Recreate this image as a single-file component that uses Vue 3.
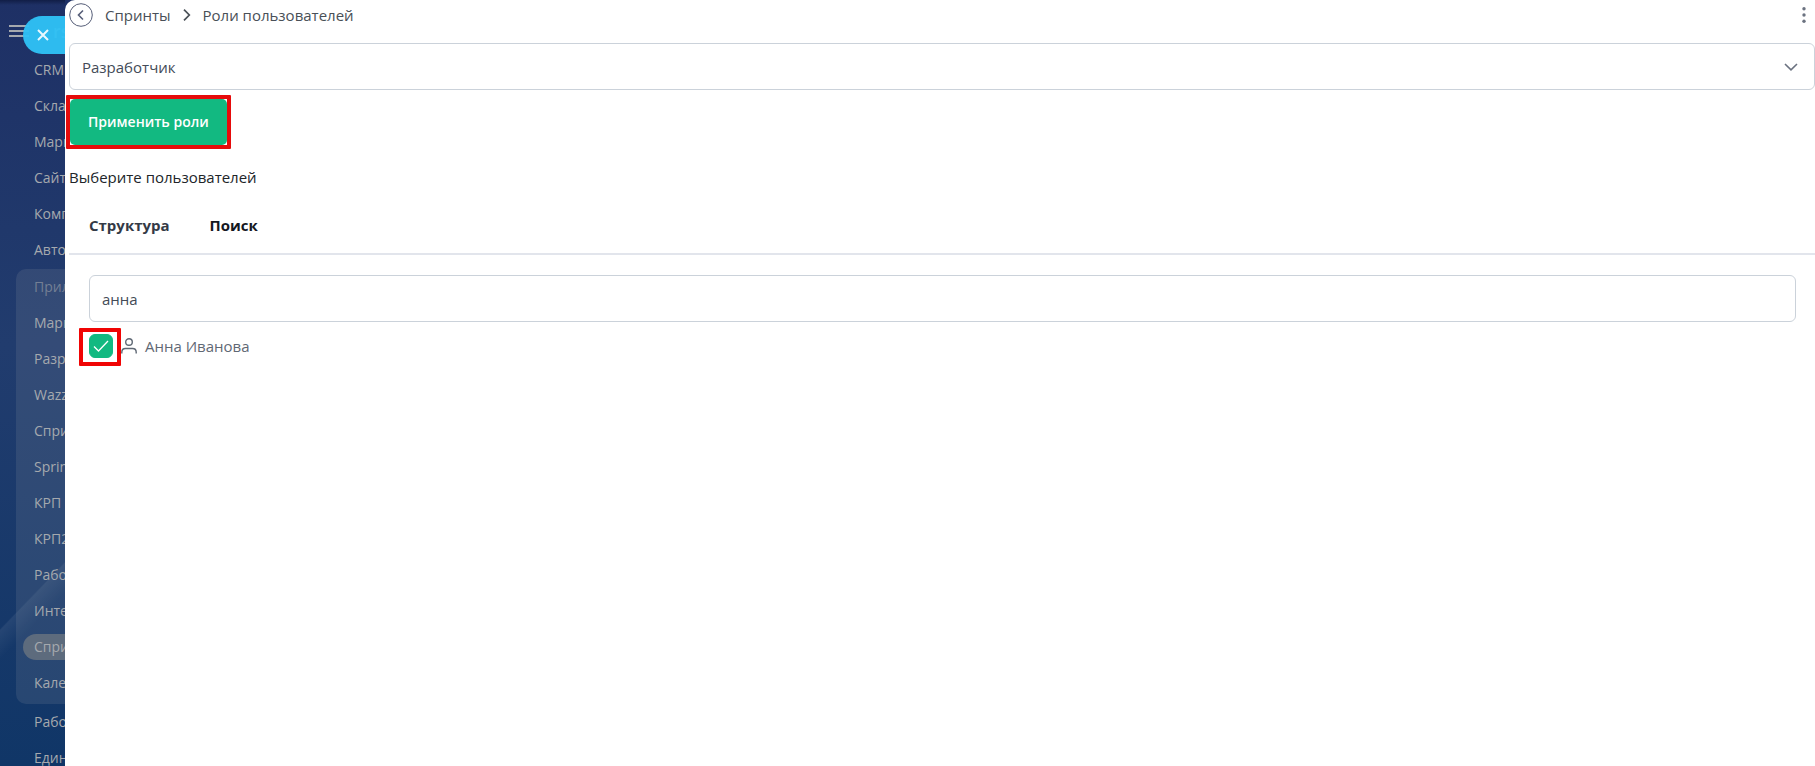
<script setup>
import { ref } from 'vue'

const role = ref('Разработчик')
const query = ref('анна')
const activeTab = ref('search')
const checked = ref(true)

const topMenu = ['CRM', 'Склад', 'Маркетинг', 'Сайты', 'Компания', 'Автоматизация']
const appMenu = [
  { title: 'Приложения', muted: true },
  { title: 'Маркет' },
  { title: 'Разработчикам' },
  { title: 'Wazzup' },
  { title: 'Спринты' },
  { title: 'Sprint' },
  { title: 'КРП' },
  { title: 'КРП2' },
  { title: 'Работа' },
  { title: 'Интеграции' },
  { title: 'Спринты', active: true },
  { title: 'Календарь' },
]
const bottomMenu = ['Работа', 'Единый']
const tabs = [
  { id: 'structure', title: 'Структура' },
  { id: 'search', title: 'Поиск' },
]
</script>

<template>
  <div class="page">
    <aside class="sidebar">
      <div class="sidebar-head">
        <svg class="burger" width="20" height="12" viewBox="0 0 20 12">
          <path d="M0 1h20M0 6h20M0 11h20" stroke="currentColor" stroke-width="2" />
        </svg>
        <span class="logo">rs</span>
      </div>
      <button class="close-btn" type="button" aria-label="Закрыть">
        <svg width="12" height="12" viewBox="0 0 12 12">
          <path d="M1 1l10 10M11 1L1 11" stroke="currentColor" stroke-width="2" />
        </svg>
      </button>
      <nav class="menu">
        <a v-for="item in topMenu" :key="item" class="menu-item" href="#"><span>{{ item }}</span></a>
        <div class="menu-group">
          <a
            v-for="(item, i) in appMenu"
            :key="i"
            class="menu-item"
            :class="{ muted: item.muted, active: item.active }"
            href="#"
          ><span>{{ item.title }}</span></a>
        </div>
        <a v-for="item in bottomMenu" :key="item" class="menu-item" href="#"><span>{{ item }}</span></a>
      </nav>
    </aside>

    <main class="panel">
      <header class="header">
        <button class="back-btn" type="button" aria-label="Назад">
          <svg width="24" height="24" viewBox="0 0 24 24" fill="none" stroke="currentColor">
            <circle cx="12" cy="12" r="11.3" stroke-width="1" />
            <path d="M14 7.5L9.5 12l4.500 4.500" stroke-width="1.600" />
          </svg>
        </button>
        <nav class="crumbs">
          <a href="#">Спринты</a>
          <svg width="8" height="12" viewBox="0 0 8 12" fill="none" stroke="currentColor">
            <path d="M1 0.700L6.300 6L1 11.300" stroke-width="1.700" />
          </svg>
          <span>Роли пользователей</span>
        </nav>
        <button class="more-btn" type="button" aria-label="Ещё">
          <svg width="4" height="16" viewBox="0 0 4 16" fill="currentColor">
            <circle cx="2" cy="1.800" r="1.700" />
            <circle cx="2" cy="8" r="1.700" />
            <circle cx="2" cy="14.200" r="1.700" />
          </svg>
        </button>
      </header>

      <div class="select-wrap">
        <select v-model="role" class="field" aria-label="Роль">
          <option>Разработчик</option>
        </select>
        <svg class="select-arrow" width="14" height="8" viewBox="0 0 14 8" fill="none" stroke="currentColor">
          <path d="M1 1l6 5.800L13 1" stroke-width="1.600" />
        </svg>
      </div>

      <div class="apply-frame">
        <button class="apply-btn" type="button">Применить роли</button>
      </div>

      <p class="caption">Выберите пользователей</p>

      <div class="tabs" role="tablist">
        <button
          v-for="tab in tabs"
          :key="tab.id"
          class="tab"
          :class="{ current: activeTab === tab.id }"
          type="button"
          role="tab"
          :aria-selected="activeTab === tab.id"
          @click="activeTab = tab.id"
        >{{ tab.title }}</button>
      </div>

      <section class="tab-body">
        <input v-model="query" class="field" type="text" aria-label="Поиск пользователей">
        <div class="user">
          <span class="check-frame">
            <span class="check">
              <input id="user-anna" v-model="checked" type="checkbox">
              <svg v-if="checked" width="16" height="12" viewBox="0 0 16 12" fill="none">
                <path d="M1 6.500L5.500 11L15 1" stroke="#fff" stroke-width="1.300" />
              </svg>
            </span>
          </span>
          <label class="user-label" for="user-anna">
            <svg width="16" height="16" viewBox="0 0 16 16" fill="none" stroke="currentColor" stroke-width="1.400">
              <circle cx="8" cy="4" r="3.300" />
              <path d="M0.800 15.500v-1.300C0.800 11.800 2.400 10.500 4.500 10.500h7c2.100 0 3.700 1.300 3.700 3.700v1.300" />
            </svg>
            <span>Анна Иванова</span>
          </label>
        </div>
      </section>
    </main>
  </div>
</template>

<style>
body {
  margin: 0;
}
</style>

<style scoped>
.page {
  display: grid;
  grid-template-columns: 65px minmax(0, 1fr);
  height: 100vh;
  overflow: hidden;
  background: linear-gradient(180deg, #1e3065 0, #213c6e 45%, #103667 100%);
  font-family: "Segoe UI", "Open Sans", "Noto Sans", sans-serif;
  font-size: 15px;
  line-height: 24px;
  color: #495057;
}

button {
  margin: 0;
  padding: 0;
  border: 0;
  background: none;
  font: inherit;
  color: inherit;
  cursor: pointer;
}

a {
  color: inherit;
  text-decoration: none;
}

svg {
  display: block;
  flex-shrink: 0;
}

.sidebar {
  position: relative;
  overflow: hidden;
  color: #a5a9ae;
  font-size: 14px;
  background:
    linear-gradient(180deg, rgba(8, 18, 50, 0.6), transparent 5px),
    linear-gradient(134deg, transparent 0 50%, rgba(255, 255, 255, 0.07) 51%, transparent 66%) 0 530px / 65px 130px no-repeat;
}

.sidebar-head {
  box-sizing: border-box;
  display: flex;
  align-items: center;
  gap: 24px;
  height: 52px;
  padding: 10px 0 0 9px;
}

.logo {
  font-size: 18px;
  font-weight: 600;
}

.close-btn {
  position: absolute;
  top: 16px;
  left: 23px;
  width: 60px;
  height: 38px;
  padding-left: 14px;
  border-radius: 19px;
  background: rgba(47, 193, 245, 0.96);
  color: #e9f8fe;
}

.menu-item {
  display: flex;
  align-items: center;
  height: 36px;
  margin-left: 23px;
  white-space: nowrap;
}

.menu-item span {
  padding-left: 11px;
}

.menu-group {
  margin: 1px 0 0 16px;
  padding-bottom: 3px;
  border-radius: 10px 0 0 10px;
  background: rgba(150, 155, 165, 0.17);
}

.menu-group .menu-item {
  margin-left: 7px;
}

.menu-group .menu-item.muted {
  color: #737f94;
}

.menu-group .menu-item.active {
  height: 26px;
  margin-top: 5px;
  margin-bottom: 5px;
  border-radius: 13px 0 0 13px;
  background: #5d6b7d;
}

.panel {
  display: flex;
  flex-direction: column;
  padding-left: 4px;
  border-top-left-radius: 10px;
  background: #fff;
}

.header {
  display: flex;
  align-items: center;
  height: 24px;
  padding: 3px 9px 0 0;
}

.back-btn {
  color: #565e78;
}

.crumbs {
  display: flex;
  align-items: center;
  gap: 12px;
  margin-left: 12px;
  font-weight: 500;
}

.more-btn {
  margin-left: auto;
  color: #6b7280;
}

.field {
  box-sizing: border-box;
  display: block;
  width: 100%;
  height: 47px;
  padding: 0 12px;
  border: 1px solid #cbd2da;
  border-radius: 6px;
  appearance: none;
  outline: none;
  background: #fff;
  font: inherit;
  color: #434b57;
}

.select-wrap {
  position: relative;
  margin-top: 16px;
}

.select-arrow {
  position: absolute;
  top: 20px;
  right: 17px;
  color: #6b7280;
  pointer-events: none;
}

.apply-frame {
  align-self: flex-start;
  margin: 5px 0 0 -3px;
  border: 4px solid #e60b0b;
  border-radius: 1px;
}

.apply-btn {
  display: block;
  height: 46px;
  padding: 0 18px;
  border-radius: 5px;
  background: #12b981;
  color: #fff;
  font-size: 14px;
  font-weight: 600;
}

.caption {
  margin: 16px 0 0;
  color: #212529;
}

.tabs {
  display: flex;
  border-bottom: 2px solid #e2e5ec;
  margin-top: 8px;
}

.tab {
  height: 56px;
  padding: 0 20px;
  font-weight: 700;
  color: #343a46;
}

.tab.current {
  color: #15181f;
}

.tab-body {
  padding: 20px 19px 0 20px;
}

.user {
  display: flex;
  align-items: center;
  margin: 6px 0 0 -10px;
}

.check-frame {
  padding: 2px 4px 4px 6px;
  border: 4px solid #f00404;
  border-radius: 1px;
}

.check {
  display: grid;
  place-items: center;
}

.check > * {
  grid-area: 1 / 1;
}

.check input {
  width: 24px;
  height: 24px;
  margin: 0;
  border: 1px solid #ced4da;
  border-radius: 6px;
  appearance: none;
}

.check input:checked {
  border-color: #12b981;
  background: #12b981;
}

.check svg {
  pointer-events: none;
}

.user-label {
  display: flex;
  align-items: center;
  gap: 8px;
  padding-bottom: 2px;
  color: #5f6874;
}
</style>
